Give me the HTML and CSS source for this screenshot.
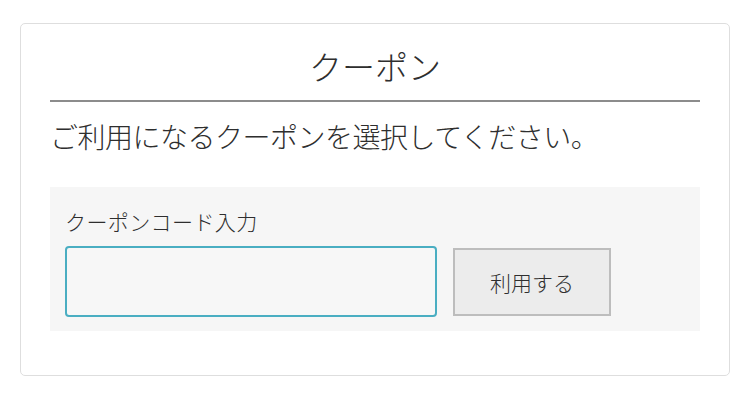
FILE: index.html
```html
<!DOCTYPE html>
<html lang="ja">
<head>
<meta charset="utf-8">
<link rel="stylesheet" href="styles.css">
</head>
<body>
<div class="card">
  <h1 class="title">クーポン</h1>
  <p class="lead">ご利用になるクーポンを選択してください。</p>
  <div class="panel">
    <label class="label" for="code">クーポンコード入力</label>
    <div class="row">
      <input class="input" id="code" type="text">
      <button class="btn" type="button">利用する</button>
    </div>
  </div>
</div>
</body>
</html>
```

FILE: styles.css
```css
html, body {
  margin: 0;
  background: #fff;
}
body {
  padding: 23px 20px 0 20px;
  font-family: "Noto Sans CJK JP", "Noto Sans", sans-serif;
  font-weight: 300;
  color: #2e2e2e;
}
.card {
  border: 1px solid #dedede;
  border-radius: 5px;
  padding: 0 29px;
  height: 351px;
  box-sizing: content-box;
}
.title {
  margin: 21px 0 0 0;
  font-size: 33px;
  line-height: 42px;
  font-weight: 300;
  text-align: center;
  padding-bottom: 13px;
  border-bottom: 2px solid #8c8c8c;
}
.lead {
  margin: 14px 0 0 0;
  font-size: 28px;
  line-height: 40px;
  letter-spacing: -0.5px;
}
.panel {
  margin-top: 31px;
  background: #f6f6f6;
  padding: 19px 16px 14px 15px;
}
.label {
  display: block;
  font-size: 21px;
  line-height: 30px;
  letter-spacing: 0.4px;
}
.row {
  display: flex;
  align-items: center;
  gap: 16px;
  margin-top: 10px;
}
.input {
  width: 372px;
  height: 71px;
  box-sizing: border-box;
  border: 2px solid #4aaec2;
  border-radius: 4px;
  background: #f7f7f7;
  margin: 0;
  outline: none;
}
.btn {
  width: 158px;
  height: 68px;
  box-sizing: border-box;
  border: 2px solid #bdbdbd;
  background: #ececec;
  border-radius: 0;
  font-family: "Noto Sans CJK JP", "Noto Sans", sans-serif;
  font-weight: 300;
  font-size: 21px;
  color: #2e2e2e;
  margin: 0;
}
```
